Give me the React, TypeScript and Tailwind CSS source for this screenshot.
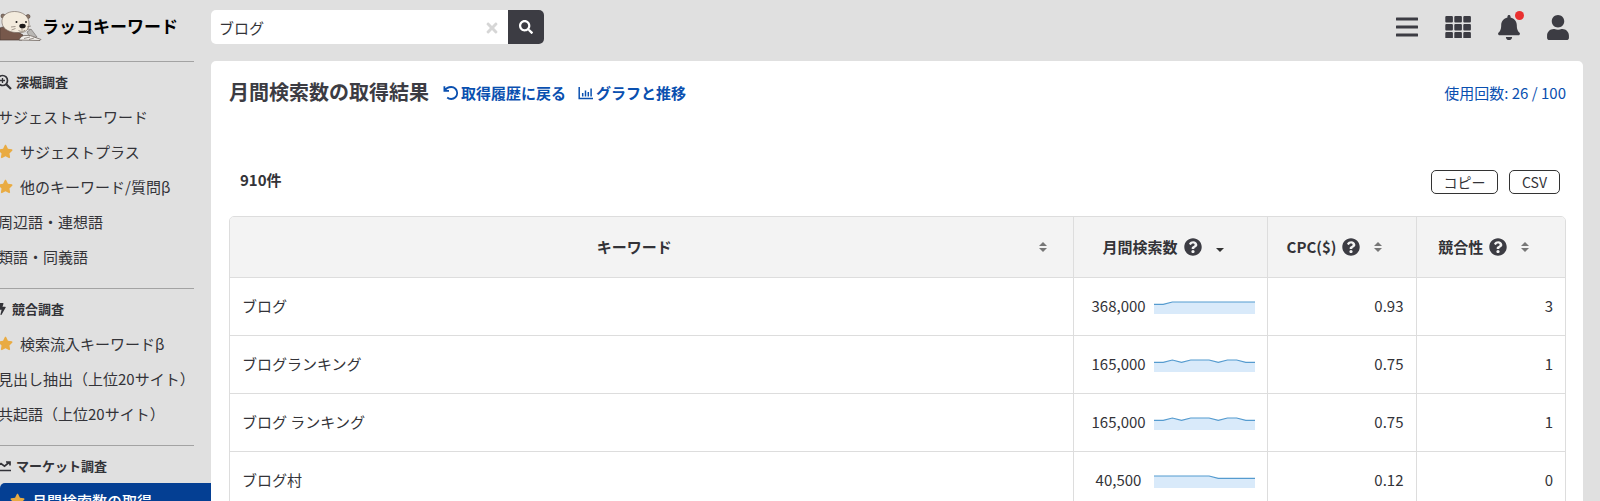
import type { ReactNode } from "react";
import { FaBell, FaBolt, FaQuestionCircle, FaSearch, FaStar, FaTimes, FaUser } from "react-icons/fa";

const menu: {
  title: string;
  icon: ReactNode;
  items: { label: string; plus?: boolean; active?: boolean }[];
}[] = [
  {
    title: "深堀調査",
    icon: <ZoomInIcon />,
    items: [
      { label: "サジェストキーワード" },
      { label: "サジェストプラス", plus: true },
      { label: "他のキーワード/質問β", plus: true },
      { label: "周辺語・連想語" },
      { label: "類語・同義語" },
    ],
  },
  {
    title: "競合調査",
    icon: <FaBolt className="-ml-1 h-3 w-3" />,
    items: [
      { label: "検索流入キーワードβ", plus: true },
      { label: "見出し抽出（上位20サイト）" },
      { label: "共起語（上位20サイト）" },
    ],
  },
  {
    title: "マーケット調査",
    icon: <TrendIcon />,
    items: [{ label: "月間検索数の取得", plus: true, active: true }],
  },
];

// trend: 1 = higher month, 0 = lower month
const rows = [
  { keyword: "ブログ", volume: "368,000", cpc: "0.93", competition: 3, trend: [0, 0, 1, 1, 1, 1, 1, 1, 1, 1, 1, 1] },
  { keyword: "ブログランキング", volume: "165,000", cpc: "0.75", competition: 1, trend: [0, 0, 1, 0, 1, 1, 1, 0, 1, 1, 0, 0] },
  { keyword: "ブログ ランキング", volume: "165,000", cpc: "0.75", competition: 1, trend: [0, 0, 1, 0, 1, 1, 1, 0, 1, 1, 0, 0] },
  { keyword: "ブログ村", volume: "40,500", cpc: "0.12", competition: 0, trend: [1, 1, 1, 1, 1, 1, 1, 0, 0, 0, 0, 0] },
];

function ZoomInIcon() {
  return (
    <svg viewBox="0 0 16 16" className="-ml-1 h-4 w-4" fill="none" stroke="currentColor" strokeWidth="1.7">
      <circle cx="6.5" cy="6.5" r="5" />
      <path d="M10.2 10.2 15 15" strokeWidth="2.2" />
      <path d="M6.5 4v5M4 6.5h5" strokeWidth="1.3" />
    </svg>
  );
}

function TrendIcon() {
  return (
    <svg viewBox="0 0 16 16" className="-ml-1 h-4 w-4" fill="none" stroke="currentColor" strokeWidth="1.7">
      <path d="M1 8.5 5 5.500l3.500 2.700 4.500-3.700M10 4h4v3.500M1 12.500h14" />
    </svg>
  );
}

function Otter() {
  return (
    <svg viewBox="0 0 42 32" className="h-8 w-[42px]">
      <path d="M0 18c4-2 9-1 14 2l9 5-1 5H0z" fill="#77584b" stroke="#4b3a33" strokeWidth="0.7" />
      <circle cx="3" cy="6" r="2" fill="#8a7568" stroke="#4b3a33" strokeWidth="0.6" />
      <circle cx="28" cy="6.5" r="2" fill="#8a7568" stroke="#4b3a33" strokeWidth="0.6" />
      <path d="M2 13C1 6 7 1.500 14.500 1.500S29.500 6 29 14c0 6-4 9-10 8.500C11 23 3 20 2 13z" fill="#f3ebdd" stroke="#6b5e55" strokeWidth="0.6" />
      <ellipse cx="22.5" cy="16" rx="3.2" ry="2.300" fill="#1c1a1a" />
      <circle cx="16.5" cy="12" r="1" fill="#1c1a1a" />
      <circle cx="26" cy="12" r="0.9" fill="#1c1a1a" />
      <path d="M22 18v2.500M18.500 20.500c2 1.200 5 1.200 6.500-.3M11 17l4.500-.5M11.500 20l4-1.500M27 17l4-1M27 19l3.500.5" fill="none" stroke="#6b5e55" strokeWidth="0.6" />
      <path d="m27 22 4-3 6 8-7 1z" fill="#b9b7b4" stroke="#6b6764" strokeWidth="0.6" />
      <path d="M19 30c1-3 4-5 7-4.500 3-.5 6 .5 8 1.500l7 2.500-1 1z" fill="#f1eeea" stroke="#5c5049" strokeWidth="0.7" />
      <path d="M24 28.500 30 27M29 29.500l5-1.500" stroke="#5c5049" strokeWidth="0.6" />
    </svg>
  );
}

function MenuIcon() {
  return (
    <svg viewBox="0 0 22 20" className="h-5 w-[22px]" fill="currentColor">
      <rect y="0.5" width="22" height="3" rx="0.5" />
      <rect y="8.5" width="22" height="3" rx="0.5" />
      <rect y="16.5" width="22" height="3" rx="0.5" />
    </svg>
  );
}

function GridIcon() {
  return (
    <svg viewBox="0 0 26 22" className="h-[22px] w-[26px]" fill="currentColor">
      {[0, 8, 16].map((y) =>
        [0.3, 9.3, 18.3].map((x) => <rect key={`${x}-${y}`} x={x} y={y} width="7.6" height="6.4" rx="1" />)
      )}
    </svg>
  );
}

function UndoIcon() {
  return (
    <svg viewBox="0 0 16 16" className="h-4 w-4" fill="none" stroke="currentColor" strokeWidth="1.8">
      <path d="M1.400 1.200v4.600H6M1.800 5.600C3.200 3.200 5.600 2 8.200 2a6 6 0 0 1 0 12c-1.500 0-2.900-.5-4-1.500" />
    </svg>
  );
}

function ChartIcon() {
  return (
    <svg viewBox="0 0 16 16" className="h-4 w-4" fill="none" stroke="currentColor" strokeWidth="1.5">
      <path d="M1.200 2v11.500H15M4.700 8v3.500M7.500 5.500v6M10.300 7v4.500M13.100 3.500v8" />
    </svg>
  );
}

function SortIcon({ desc }: { desc?: boolean }) {
  return (
    <svg viewBox="0 0 8 10" className={desc ? "h-[10px] w-2 text-[#333]" : "h-[10px] w-2 text-[#777]"} fill="currentColor">
      {!desc && <path d="M0 4 4 0l4 4z" />}
      <path d="M0 6h8l-4 4z" />
    </svg>
  );
}

function Sparkline({ trend }: { trend: number[] }) {
  const step = 101 / (trend.length - 1);
  const points = trend.map((v, i) => `${i * step},${v ? 4 : 6.3}`).join(" ");
  return (
    <svg viewBox="0 0 101 16" className="h-4 w-[101px] shrink-0">
      <polygon points={`0,16 ${points} 101,16`} fill="#d9eafa" />
      <polyline points={points} fill="none" stroke="#559bcf" strokeWidth="1.2" />
    </svg>
  );
}

function HeadCell({ label, desc }: { label: string; desc?: boolean }) {
  return (
    <th className="border-l border-[#ddd] p-0 pr-[14px]">
      <div className="flex items-center justify-center">
        {label}
        <FaQuestionCircle className="ml-1.5 h-[18px] w-[18px] text-[#3c3c43]" />
        <button type="button" aria-label={`${label}で並べ替え`} className="ml-[14px]">
          <SortIcon desc={desc} />
        </button>
      </div>
    </th>
  );
}

export default function App() {
  return (
    <div className="flex h-screen flex-col overflow-hidden bg-[#e0e0e0] font-['Noto_Sans_CJK_JP',sans-serif] text-[15px] leading-[22px] text-[#333338]">
      <header className="flex h-[61px] shrink-0 items-start pr-[31px]">
        <a href="#" className="flex w-[211px] shrink-0 items-center pt-[10px] text-[17px] font-bold leading-8 text-black">
          <Otter />
          <span>ラッコキーワード</span>
        </a>
        <form className="mt-[10px] flex h-[34px] w-[333px] overflow-hidden rounded-[5px] bg-white">
          <input
            type="text"
            aria-label="キーワード"
            defaultValue="ブログ"
            className="min-w-0 flex-1 px-2 pt-0.5 outline-none"
          />
          <button type="button" aria-label="クリア" className="px-2 pt-0.5 text-[#d6d6d6]">
            <FaTimes className="h-4 w-4" />
          </button>
          <button type="button" aria-label="検索" className="flex w-9 items-center justify-center bg-[#3c3c43] text-white">
            <FaSearch className="h-[14px] w-[14px]" />
          </button>
        </form>
        <nav className="ml-auto flex h-[54px] items-center gap-[27px] text-[#3c3c43]">
          <button type="button" aria-label="メニュー">
            <MenuIcon />
          </button>
          <button type="button" aria-label="アプリ">
            <GridIcon />
          </button>
          <button type="button" aria-label="お知らせ" className="relative">
            <FaBell className="h-[25px] w-[22px]" />
            <span className="absolute -right-1 -top-1 h-[9px] w-[9px] rounded-full bg-[#e93030]" />
          </button>
          <button type="button" aria-label="アカウント">
            <FaUser className="h-[25px] w-[22px]" />
          </button>
        </nav>
      </header>

      <div className="flex min-h-0 flex-1">
        <aside className="w-[211px] shrink-0">
          {menu.map((section) => (
            <section key={section.title} className="pb-[14px]">
              <hr className="mr-[17px] border-[#a3a3a3]" />
              <h2 className="flex h-[37px] items-center gap-1 pt-0.5 text-[13px] font-bold">
                {section.icon}
                {section.title}
              </h2>
              <ul>
                {section.items.map((item) => (
                  <li key={item.label}>
                    <a
                      href="#"
                      className={
                        item.active
                          ? "flex h-[35px] items-center gap-[7px] whitespace-nowrap rounded-l-[5px] bg-[#043f93] pl-[10px] font-medium text-white"
                          : "-ml-0.5 flex h-[35px] items-center gap-[7px] whitespace-nowrap"
                      }
                    >
                      {item.plus && <FaStar className="h-[15px] w-[15px] text-[#e9ab42]" />}
                      {item.label}
                    </a>
                  </li>
                ))}
              </ul>
            </section>
          ))}
        </aside>

        <main className="mr-[17px] flex-1 overflow-hidden rounded-t-[5px] bg-white pl-[18px] pr-[17px]">
          <div className="flex h-[62px] items-center">
            <h1 className="text-xl font-bold text-[#3c3c43]">月間検索数の取得結果</h1>
            <a href="#" className="ml-[14px] flex items-center gap-0.5 pt-0.5 font-bold text-[#0a50b0]">
              <UndoIcon />
              取得履歴に戻る
            </a>
            <a href="#" className="ml-3 flex items-center gap-0.5 pt-0.5 font-bold text-[#0a50b0]">
              <ChartIcon />
              グラフと推移
            </a>
            <span className="ml-auto pt-0.5 text-[#0a50b0]">使用回数: 26 / 100</span>
          </div>

          <div className="mt-[47px] flex h-6 items-start justify-between pl-[11px] pr-1.5">
            <p className="font-bold leading-5">910件</p>
            <div className="flex gap-[11px] text-sm">
              <button type="button" className="flex h-6 w-[67px] items-center justify-center rounded-[5px] border border-[#333]">
                コピー
              </button>
              <button type="button" className="flex h-6 w-[51px] items-center justify-center rounded-[5px] border border-[#333]">
                CSV
              </button>
            </div>
          </div>

          <div className="mt-[22px] overflow-hidden rounded-t-[5px] border border-[#ddd]">
            <table className="w-full table-fixed border-collapse">
              <colgroup>
                <col />
                <col className="w-[194px]" />
                <col className="w-[149px]" />
                <col className="w-[149px]" />
              </colgroup>
              <thead>
                <tr className="h-[60px] bg-[#f3f3f3]">
                  <th className="p-0">
                    <div className="flex items-center">
                      <span className="flex-1">キーワード</span>
                      <button type="button" aria-label="キーワードで並べ替え" className="mr-[26px]">
                        <SortIcon />
                      </button>
                    </div>
                  </th>
                  <HeadCell label="月間検索数" desc />
                  <HeadCell label="CPC($)" />
                  <HeadCell label="競合性" />
                </tr>
              </thead>
              <tbody>
                {rows.map((row) => (
                  <tr key={row.keyword} className="h-[58px] border-t border-[#ddd]">
                    <td className="px-3">{row.keyword}</td>
                    <td className="border-l border-[#ddd] px-3">
                      <div className="flex items-center justify-end gap-2">
                        <span className="w-[54px] text-center">{row.volume}</span>
                        <Sparkline trend={row.trend} />
                      </div>
                    </td>
                    <td className="border-l border-[#ddd] px-3 text-right">{row.cpc}</td>
                    <td className="border-l border-[#ddd] px-3 text-right">{row.competition}</td>
                  </tr>
                ))}
              </tbody>
            </table>
          </div>
        </main>
      </div>
    </div>
  );
}
